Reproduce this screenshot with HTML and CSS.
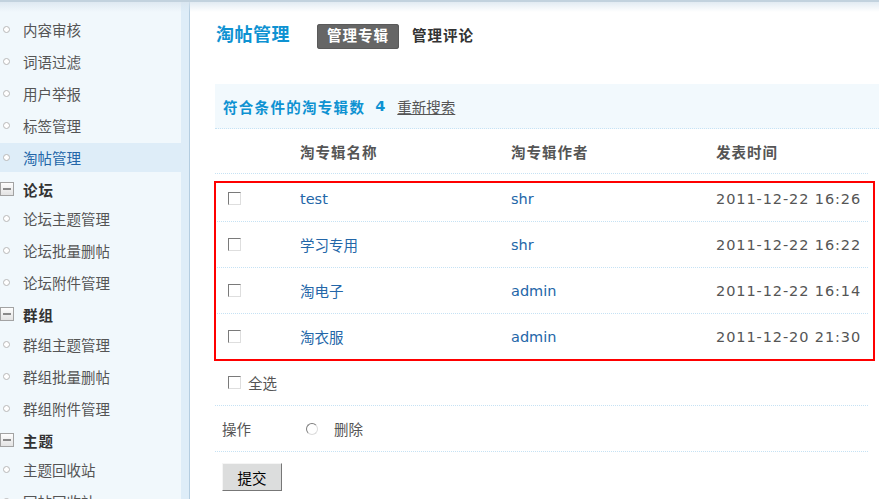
FILE: index.html
```html
<!DOCTYPE html>
<html lang="zh-CN">
<head>
<meta charset="utf-8">
<title>淘帖管理</title>
<link rel="stylesheet" href="styles.css">
</head>
<body>
<div class="page">
  <aside class="side">
    <ul class="menu">
      <li class="item"><span class="dot"></span>内容审核</li>
      <li class="item"><span class="dot"></span>词语过滤</li>
      <li class="item"><span class="dot"></span>用户举报</li>
      <li class="item"><span class="dot"></span>标签管理</li>
      <li class="item on"><span class="dot"></span>淘帖管理</li>
      <li class="group"><svg class="minus" width="15" height="15" viewBox="0 0 15 15"><defs><linearGradient id="mg" x1="0" y1="0" x2="0" y2="1"><stop offset="0" stop-color="#ffffff"/><stop offset="1" stop-color="#e2e2e2"/></linearGradient></defs><rect x="0.5" y="0.5" width="13" height="13" fill="url(#mg)" stroke="#a3a3a3"/><rect x="3" y="6" width="8" height="2" fill="#8a8a8a"/></svg>论坛</li>
      <li class="item"><span class="dot"></span>论坛主题管理</li>
      <li class="item"><span class="dot"></span>论坛批量删帖</li>
      <li class="item"><span class="dot"></span>论坛附件管理</li>
      <li class="group"><svg class="minus" width="15" height="15" viewBox="0 0 15 15"><rect x="0.5" y="0.5" width="13" height="13" fill="url(#mg)" stroke="#a3a3a3"/><rect x="3" y="6" width="8" height="2" fill="#8a8a8a"/></svg>群组</li>
      <li class="item"><span class="dot"></span>群组主题管理</li>
      <li class="item"><span class="dot"></span>群组批量删帖</li>
      <li class="item"><span class="dot"></span>群组附件管理</li>
      <li class="group"><svg class="minus" width="15" height="15" viewBox="0 0 15 15"><rect x="0.5" y="0.5" width="13" height="13" fill="url(#mg)" stroke="#a3a3a3"/><rect x="3" y="6" width="8" height="2" fill="#8a8a8a"/></svg>主题</li>
      <li class="item"><span class="dot"></span>主题回收站</li>
      <li class="item"><span class="dot"></span>回帖回收站</li>
    </ul>
    <div class="strip"></div>
  </aside>
  <main class="main">
    <div class="head">
      <h3 class="title">淘帖管理</h3>
      <ul class="tabs">
        <li class="tab cur">管理专辑</li>
        <li class="tab">管理评论</li>
      </ul>
    </div>
    <div class="result"><span class="lbl">符合条件的淘专辑数</span><span class="num">4</span><a class="resel">重新搜索</a></div>
    <div class="tbl">
      <div class="row th">
        <span></span><span>淘专辑名称</span><span>淘专辑作者</span><span>发表时间</span>
      </div>
      <div class="rows">
        <div class="row"><span class="cb"></span><a class="lnk">test</a><a class="lnk">shr</a><span class="time">2011-12-22 16:26</span></div>
        <div class="row"><span class="cb"></span><a class="lnk">学习专用</a><a class="lnk">shr</a><span class="time">2011-12-22 16:22</span></div>
        <div class="row"><span class="cb"></span><a class="lnk">淘电子</a><a class="lnk">admin</a><span class="time">2011-12-22 16:14</span></div>
        <div class="row"><span class="cb"></span><a class="lnk">淘衣服</a><a class="lnk">admin</a><span class="time">2011-12-20 21:30</span></div>
        <div class="mark"></div>
      </div>
      <div class="line foot"><span class="cb"></span><span class="cbl">全选</span></div>
      <div class="line op"><span class="oplbl">操作</span><span class="radio"></span><span>删除</span></div>
      <div class="submit"><button class="btn" type="button">提交</button></div>
    </div>
  </main>
</div>
</body>
</html>
```

FILE: styles.css
```css
html, body {
  margin: 0;
  padding: 0;
}
body {
  font-family: "DejaVu Sans", "Noto Sans CJK SC", sans-serif;
  font-size: 14.5px;
  color: #555;
  background: #fff;
}
.page {
  position: relative;
  display: flex;
  height: 499px;
  overflow: hidden;
}
.page::before {
  content: "";
  position: absolute;
  left: 0;
  right: 0;
  top: 0;
  height: 12px;
  background: linear-gradient(#c2d2de 0, #c2d2de 1.5px, rgba(216, 228, 238, 0.75) 2px, rgba(255, 255, 255, 0) 12px);
  pointer-events: none;
}

/* sidebar */
.side {
  flex: none;
  display: flex;
  width: 189px;
  border-right: 1px solid #b4cde0;
}
.menu {
  list-style: none;
  margin: 0;
  padding: 14.5px 0 0;
  width: 181px;
  background: #f1f8fc;
}
.strip {
  width: 8px;
  background: #deedf8;
}
.item {
  display: flex;
  align-items: center;
  height: 29px;
  margin-bottom: 3px;
  color: #555;
  white-space: nowrap;
}
.item.on {
  background: #deedf8;
  color: #2366a8;
}
.dot {
  box-sizing: border-box;
  width: 7px;
  height: 7px;
  margin: 0 13px 0 3px;
  border: 1px solid #b8b8b8;
  border-radius: 50%;
  background: #fff;
}
.group {
  display: flex;
  align-items: center;
  height: 29.5px;
  font-weight: bold;
  color: #333;
  letter-spacing: 1px;
}
.minus {
  flex: none;
  margin-right: 8px;
}

/* main */
.main {
  flex: 1;
  padding: 24px 0 0 25px;
}
.head {
  display: flex;
  align-items: flex-start;
  height: 25px;
}
.title {
  margin: 0 0 0 1px;
  font-size: 18px;
  line-height: 22px;
  font-weight: bold;
  letter-spacing: 0.5px;
  color: #0e92d2;
}
.tabs {
  display: flex;
  list-style: none;
  margin: 0 0 0 27px;
  padding: 0;
}
.tab {
  height: 25px;
  line-height: 25px;
  padding: 0 10px;
  margin-right: 3px;
  border-radius: 3px;
  font-weight: bold;
  letter-spacing: 1px;
  color: #333;
}
.tab.cur {
  background: #666;
  color: #fff;
  box-shadow: inset 0 0 0 1px #5a5a5a;
}

.result {
  display: flex;
  align-items: center;
  height: 44px;
  margin-top: 35px;
  padding-left: 8px;
  background: #f2f9fd;
  border-bottom: 1px dotted #c6e2f4;
}
.lbl {
  font-weight: bold;
  letter-spacing: 1.3px;
  color: #0e92d2;
}
.num {
  margin: 0 12px 0 10px;
  font-weight: bold;
  color: #0e92d2;
}
.resel {
  color: #555;
  text-decoration: underline;
}

.tbl {
  width: 653px;
}
.row {
  display: grid;
  grid-template-columns: 85px 211px 205px 1fr;
  align-items: center;
  border-bottom: 1px dotted #c6e2f4;
}
.th {
  height: 44px;
  font-weight: bold;
  letter-spacing: 1px;
  color: #555;
}
.rows {
  position: relative;
}
.rows .row {
  height: 45px;
}
.rows .row:first-child {
  padding-top: 2px;
}
.mark {
  position: absolute;
  left: -1px;
  right: -7px;
  top: 7px;
  bottom: -1px;
  border: 2px solid #ff0000;
  pointer-events: none;
}
.cb {
  display: block;
  width: 11px;
  height: 11px;
  margin-left: 13px;
  border: 1px solid;
  border-color: #7a7a7a #dedede #dedede #7a7a7a;
  background: #fff;
}
.lnk {
  color: #2366a8;
}
.time {
  color: #555;
  letter-spacing: 0.9px;
  white-space: nowrap;
}

.line {
  display: flex;
  align-items: center;
  height: 45px;
  border-bottom: 1px dotted #c6e2f4;
}
.cbl {
  margin-left: 7px;
}
.op {
  padding-left: 7px;
}
.oplbl {
  width: 84px;
}
.radio {
  box-sizing: border-box;
  width: 12px;
  height: 12px;
  margin-right: 16px;
  border-radius: 50%;
  border: 1px solid;
  border-color: #7d7d7d #dcdcdc #dcdcdc #7d7d7d;
  background: #fff;
}
.submit {
  margin-top: 11px;
  padding-left: 7px;
}
.btn {
  box-sizing: border-box;
  width: 60px;
  height: 28px;
  padding: 0;
  border: 1px solid;
  border-color: #f5f5f5 #777 #777 #f5f5f5;
  background: #dcdddd;
  font-family: "Noto Sans CJK SC", sans-serif;
  font-size: 14.5px;
  color: #000;
}
```
